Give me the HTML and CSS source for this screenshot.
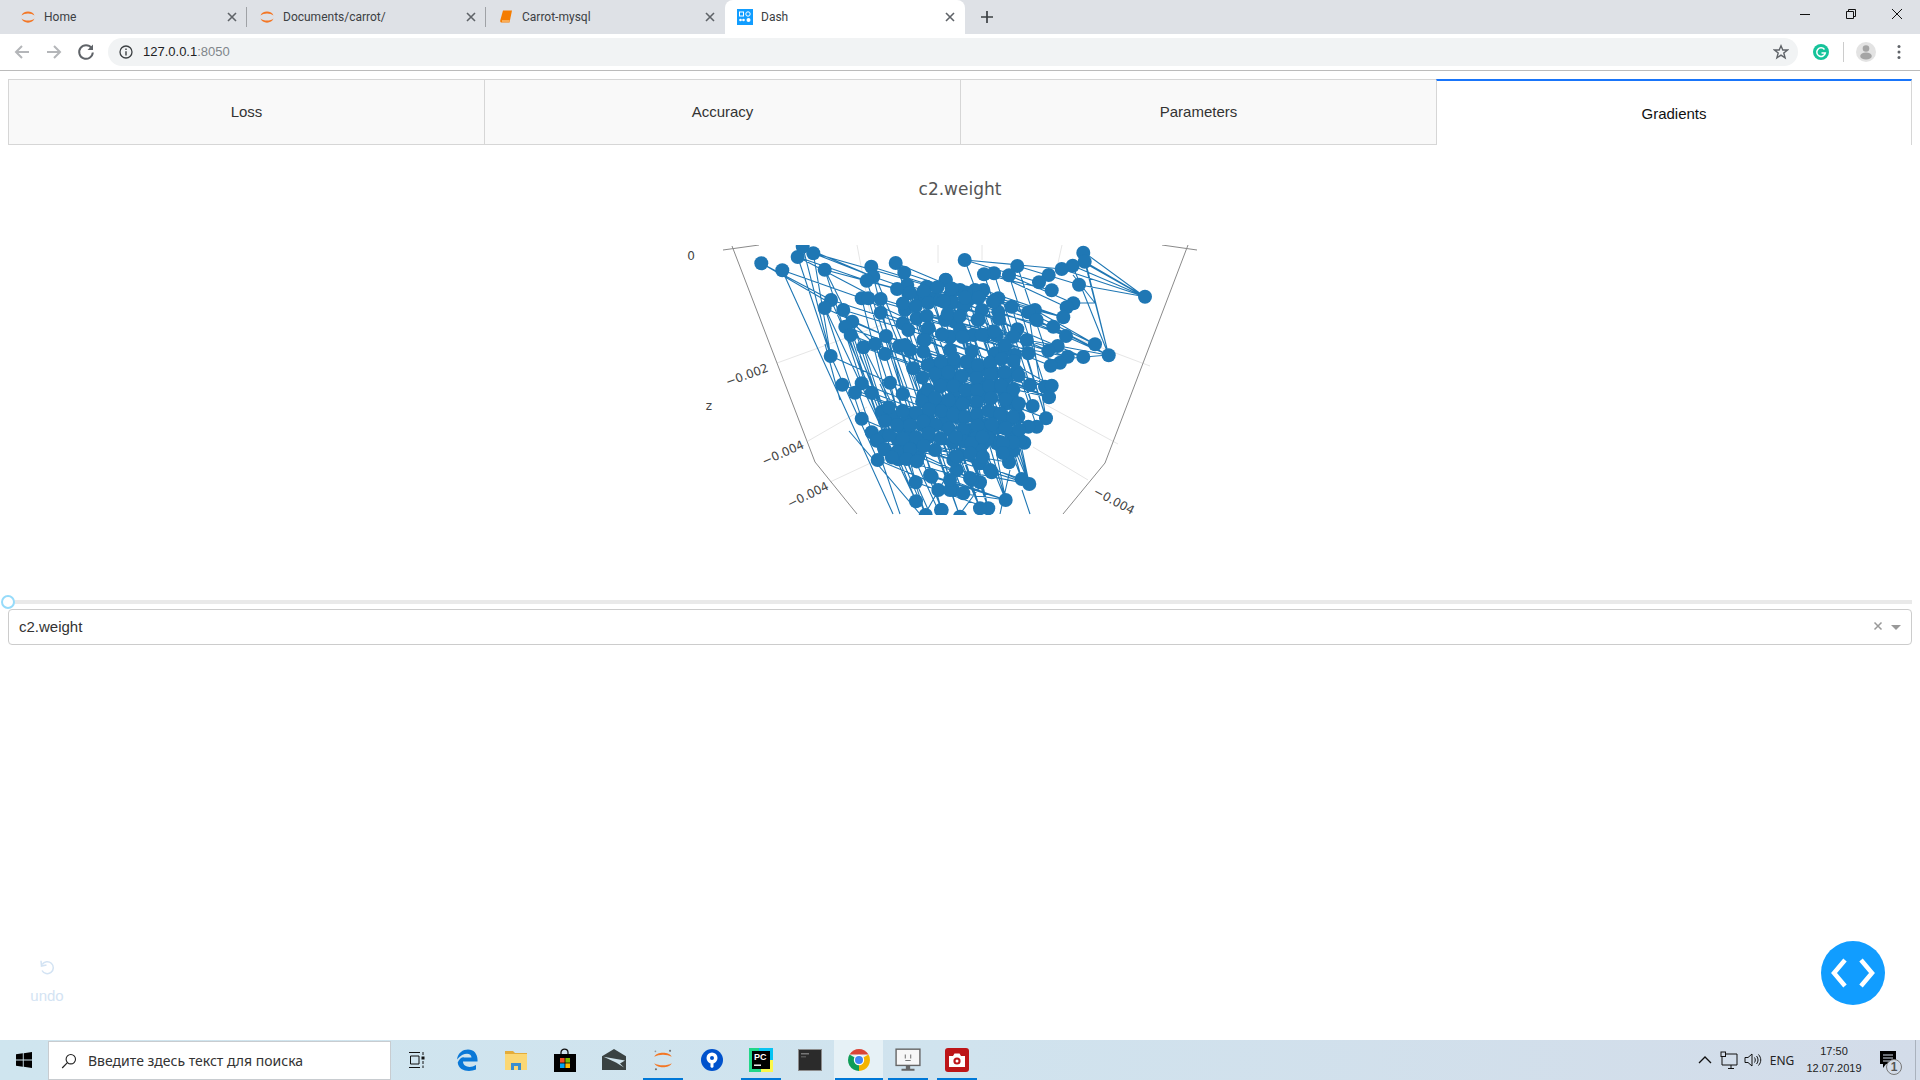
FILE: index.html
```html
<!DOCTYPE html>
<html>
<head>
    <meta charset="UTF-8" />
    <title>Dash</title>
    <link rel="stylesheet" href="styles.css">
</head>
<body>
    <svg class="icon-defs" width="0" height="0">
        <symbol id="jupyter" viewBox="0 0 16 16">
            <path fill="#f37726" d="M1.500 6.500C3 1 13 1 14.500 6.500C11.500 3.800 4.500 3.800 1.500 6.500Z"/>
            <path fill="#f37726" d="M1.500 9.500C4.500 12.200 11.500 12.200 14.500 9.500C13 15 3 15 1.500 9.500Z"/>
        </symbol>
        <symbol id="close-x" viewBox="0 0 12 12">
            <path d="M2 2L10 10M10 2L2 10" stroke="#5f6368" stroke-width="1.600" fill="none"/>
        </symbol>
    </svg>

    <div class="tabstrip">
        <div class="tab tab-sep">
            <svg class="favicon"><use href="#jupyter"/></svg>
            <span class="tab-title">Home</span>
            <svg class="tab-close"><use href="#close-x"/></svg>
        </div>
        <div class="tab tab-sep">
            <svg class="favicon"><use href="#jupyter"/></svg>
            <span class="tab-title">Documents/carrot/</span>
            <svg class="tab-close"><use href="#close-x"/></svg>
        </div>
        <div class="tab">
            <svg class="favicon" viewBox="0 0 16 16">
                <path fill="#f57c00" d="M5 1.500H14L11.500 13.500H4C2.500 13.500 2 12.500 2.300 11.200Z"/>
                <path fill="#ffd9a8" d="M4 11.500H11.600L11.300 12.500H4Z"/>
            </svg>
            <span class="tab-title">Carrot-mysql</span>
            <svg class="tab-close"><use href="#close-x"/></svg>
        </div>
        <div class="tab tab-current">
            <svg class="favicon" viewBox="0 0 16 16">
                <rect width="16" height="16" fill="#119dff"/>
                <rect x="2.500" y="3" width="4" height="4" fill="none" stroke="#fff"/>
                <circle cx="11" cy="5" r="2.200" fill="none" stroke="#fff"/>
                <circle cx="3.500" cy="11" r="1.300" fill="#fff"/>
                <circle cx="6.500" cy="11" r="1.300" fill="#fff"/>
                <circle cx="11.500" cy="11" r="2" fill="#fff"/>
            </svg>
            <span class="tab-title">Dash</span>
            <svg class="tab-close"><use href="#close-x"/></svg>
        </div>
        <svg class="new-tab" viewBox="0 0 14 14">
            <path d="M7 1V13M1 7H13" stroke="#3c4043" stroke-width="1.700"/>
        </svg>
        <div class="window-controls">
            <svg class="win-btn" viewBox="0 0 46 28"><path d="M18 14.500H28" stroke="#111" fill="none"/></svg>
            <svg class="win-btn" viewBox="0 0 46 28"><path d="M18.500 11.500H25.500V18.500H18.500ZM20.500 11.500V9.500H27.500V16.500H25.500" stroke="#111" fill="none"/></svg>
            <svg class="win-btn" viewBox="0 0 46 28"><path d="M18 9L28 19M28 9L18 19" stroke="#111" fill="none"/></svg>
        </div>
    </div>

    <div class="toolbar">
        <svg class="tool-btn" viewBox="0 0 32 32"><path d="M23 16H10M16 10L10 16L16 22" stroke="#b4b6b9" stroke-width="2" fill="none"/></svg>
        <svg class="tool-btn" viewBox="0 0 32 32"><path d="M9 16H22M16 10L22 16L16 22" stroke="#b4b6b9" stroke-width="2" fill="none"/></svg>
        <svg class="tool-btn" viewBox="0 0 32 32">
            <path d="M21.500 12A6.800 6.800 0 1 0 22.800 16.500" stroke="#5f6368" stroke-width="2" fill="none"/>
            <path d="M23 8.500V14H17.500Z" fill="#5f6368"/>
        </svg>
        <div class="address-bar">
            <svg class="info-icon" viewBox="0 0 14 14">
                <circle cx="7" cy="7" r="6" stroke="#3c4043" stroke-width="1.300" fill="none"/>
                <path d="M7 6.200V10.500M7 3.500V5" stroke="#3c4043" stroke-width="1.400"/>
            </svg>
            <span class="url">127.0.0.1<span class="url-port">:8050</span></span>
            <svg class="star-icon" viewBox="0 0 16 16">
                <path d="M8 1.800L9.800 6H14.500L10.800 9L12.100 13.800L8 11.100L3.900 13.800L5.200 9L1.500 6H6.200Z" stroke="#5f6368" stroke-width="1.400" fill="none"/>
            </svg>
        </div>
        <svg class="tool-btn" viewBox="0 0 32 32">
            <circle cx="16" cy="16" r="8" fill="#15c39a"/>
            <path d="M19.500 13.500A4.300 4.300 0 1 0 20.300 17H16.500" stroke="#fff" stroke-width="1.500" fill="none"/>
        </svg>
        <div class="tool-sep"></div>
        <svg class="tool-btn" viewBox="0 0 32 32">
            <circle cx="16" cy="16" r="10" fill="#e3e3e3"/>
            <circle cx="16" cy="12.500" r="3.300" fill="#a5a5a5"/>
            <ellipse cx="16" cy="20" rx="5.800" ry="3.600" fill="#a5a5a5"/>
        </svg>
        <svg class="tool-btn tool-menu" viewBox="0 0 32 32">
            <circle cx="16" cy="10.500" r="1.500" fill="#5f6368"/>
            <circle cx="16" cy="16" r="1.500" fill="#5f6368"/>
            <circle cx="16" cy="21.500" r="1.500" fill="#5f6368"/>
        </svg>
    </div>

    <div class="app">
        <div class="dash-tabs">
            <div class="dash-tab">Loss</div>
            <div class="dash-tab">Accuracy</div>
            <div class="dash-tab">Parameters</div>
            <div class="dash-tab dash-tab-selected">Gradients</div>
        </div>

        <!-- viewBox uses page coordinates, handier when reading points off the screenshot -->
        <svg class="plot" viewBox="8 145 1904 450">
            <defs>
                <clipPath id="scene-clip"><rect x="640" y="245" width="620" height="270"/></clipPath>
            </defs>
            <text class="plot-title" x="960" y="195" text-anchor="middle">c2.weight</text>
            <g clip-path="url(#scene-clip)">
                <g class="grid-lines">
                    <path d="M777 363L890 322M808 441L867 407M830 482L877 460"/>
                    <path d="M1150 366L1073 337M1118 444L1037 400M1088 480L1033 447"/>
                    <path d="M857 245L870 313M938 245L938 263M982 245L982 260M1062 245L1058 263"/>
                </g>
                <g class="axis-lines">
                    <path d="M723 250L759 245M732 246L815 462L857 514"/>
                    <path d="M1162 245L1197 250M1188 245L1105 463L1063 514"/>
                </g>
                <g id="trace"></g>
            </g>
            <g class="tick-labels">
                <text x="691" y="260" text-anchor="middle">0</text>
                <text x="709" y="410" text-anchor="middle">z</text>
                <text transform="translate(747 375) rotate(-20)" y="4" text-anchor="middle">−0.002</text>
                <text transform="translate(783 453) rotate(-24)" y="4" text-anchor="middle">−0.004</text>
                <text transform="translate(808 495) rotate(-26)" y="4" text-anchor="middle">−0.004</text>
                <text transform="translate(1114 501) rotate(28)" y="4" text-anchor="middle">−0.004</text>
            </g>
        </svg>

        <div class="slider">
            <div class="slider-track"></div>
            <div class="slider-handle"></div>
        </div>

        <div class="dropdown">
            <span class="dropdown-value">c2.weight</span>
            <svg class="dropdown-clear" viewBox="0 0 10 10"><path d="M1.500 1.500L8.500 8.500M8.500 1.500L1.500 8.500" stroke="#999" stroke-width="1.500"/></svg>
            <span class="dropdown-arrow"></span>
        </div>

        <div class="undo">
            <svg class="undo-icon" viewBox="0 0 18 18">
                <path d="M4.200 5.500A6 6 0 1 1 4 11.500" stroke="#d3e3f3" stroke-width="1.500" fill="none"/>
                <path d="M3 1.800L3.500 7L8.500 6" stroke="#d3e3f3" stroke-width="1.500" fill="none"/>
            </svg>
            <div>undo</div>
        </div>

        <div class="debug-btn">
            <svg viewBox="0 0 64 64" width="64" height="64">
                <path d="M24 19L13 32L24 45M40 19L51 32L40 45" stroke="#fff" stroke-width="4.500" fill="none"/>
            </svg>
        </div>
    </div>

    <div class="taskbar">
        <div class="start-btn">
            <svg viewBox="0 0 16 16" width="16" height="16">
                <path fill="#000" d="M0 2.300L6.800 1.300V7.600H0ZM7.700 1.200L16 0V7.600H7.700ZM0 8.400H6.800V14.700L0 13.700ZM7.700 8.400H16V16L7.700 14.800Z"/>
            </svg>
        </div>
        <div class="search-box">
            <svg class="search-icon" viewBox="0 0 16 16"><circle cx="9.800" cy="6.200" r="4.700" stroke="#222" stroke-width="1.100" fill="none"/><path d="M6.400 9.600L1.200 15" stroke="#222" stroke-width="1.200"/></svg>
            <span>Введите здесь текст для поиска</span>
        </div>
        <div class="task-view">
            <svg viewBox="0 0 18 18" width="18" height="18">
                <path d="M1 1.500H12M1 16.500H12M2.500 5H11V13H2.500Z" stroke="#111" fill="none"/>
                <path d="M15 1V4M15 10V13M15 14.500V17" stroke="#111" fill="none"/>
                <rect x="13.500" y="5.500" width="3" height="3" fill="#111"/>
            </svg>
        </div>
        <div class="task-item">
            <svg viewBox="0 0 24 24" width="24" height="24">
                <path fill="#0a78d7" d="M2 11.500C3 4.500 8 1.500 13 1.500C19 1.500 23 6 22.500 13.500H8C8 19 15.500 20.500 21 17V21.500C14 24.500 3.500 23 2.700 14.500C4.500 10 8 8.500 9 9.500C8.500 10 8.200 10.500 8 9.500H16.500C16.500 4.500 8 4 2 11.500Z"/>
            </svg>
        </div>
        <div class="task-item">
            <svg viewBox="0 0 24 24" width="24" height="24">
                <path fill="#e4ac3a" d="M1 3H9L11 5H23V8H1Z"/>
                <path fill="#fbd774" d="M1 6H23V22H1Z"/>
                <path fill="#3a8ed0" d="M7 22V15H17V22H14V18H10V22Z"/>
            </svg>
        </div>
        <div class="task-item">
            <svg viewBox="0 0 24 24" width="24" height="24">
                <path d="M8 7V4.500C8 0 15 0 15 4.500V7" stroke="#111" stroke-width="1.300" fill="none"/>
                <rect x="1" y="6" width="22" height="18" fill="#000"/>
                <rect x="7" y="10" width="4.600" height="4.600" fill="#f25022"/>
                <rect x="12.400" y="10" width="4.600" height="4.600" fill="#7fba00"/>
                <rect x="7" y="15.400" width="4.600" height="4.600" fill="#00a4ef"/>
                <rect x="12.400" y="15.400" width="4.600" height="4.600" fill="#ffb900"/>
            </svg>
        </div>
        <div class="task-item">
            <svg viewBox="0 0 24 24" width="24" height="24">
                <path fill="#3a4242" d="M12 1L24 8.200V22H0V8.200Z"/>
                <path fill="#cfe3ec" d="M1.500 8.800L23 12.500L18 15.500L22 19.500L14 14.500Z"/>
            </svg>
        </div>
        <div class="task-item running">
            <svg viewBox="0 0 24 24" width="26" height="26">
                <path fill="#f37726" d="M4 9C6 4 18 4 20 9C16 6.500 8 6.500 4 9Z"/>
                <path fill="#f37726" d="M4 15C8 17.500 16 17.500 20 15C18 20 6 20 4 15Z"/>
                <circle cx="18.500" cy="3.500" r="1" fill="#767677"/>
                <circle cx="5" cy="4" r="0.800" fill="#989798"/>
                <circle cx="5.500" cy="20.500" r="1" fill="#6f7070"/>
            </svg>
        </div>
        <div class="task-item">
            <svg viewBox="0 0 24 24" width="24" height="24">
                <circle cx="12" cy="12" r="11" fill="#0052cc"/>
                <circle cx="12" cy="10" r="5.500" fill="#fff"/>
                <circle cx="12" cy="10" r="2" fill="#0052cc"/>
                <path fill="#fff" d="M10.500 13H13.500V19L12 20L10.500 19Z"/>
            </svg>
        </div>
        <div class="task-item running">
            <svg viewBox="0 0 24 24" width="24" height="24">
                <path fill="#21d789" d="M0 0H16V12H0Z"/>
                <path fill="#fcf84a" d="M10 10H24V24H8Z"/>
                <path fill="#07c3f2" d="M10 0H24V12H10Z"/>
                <path fill="#21d789" d="M0 10H12V24H0Z"/>
                <rect x="3" y="3" width="18" height="18" fill="#000"/>
                <text class="pc-letters" x="5" y="12">PC</text>
                <rect x="5" y="16.500" width="7" height="1.400" fill="#fff"/>
            </svg>
        </div>
        <div class="task-item">
            <svg viewBox="0 0 24 24" width="24" height="24">
                <rect x="0.500" y="1.500" width="23" height="21" fill="#2b2b2b" stroke="#8c8c8c"/>
                <rect x="3" y="5" width="8" height="1.500" fill="#777"/>
                <rect x="3" y="8" width="5" height="1.500" fill="#555"/>
            </svg>
        </div>
        <div class="task-item running active">
            <svg viewBox="0 0 24 24" width="24" height="24">
                <path fill="#db4437" d="M2.500 6.500A11 11 0 0 1 21.500 6.500H12Z"/>
                <path fill="#f4b400" d="M21.500 6.500A11 11 0 0 1 12 23L12 12Z"/>
                <path fill="#0f9d58" d="M12 23A11 11 0 0 1 2.500 6.500L12 12Z"/>
                <circle cx="12" cy="12" r="5.200" fill="#fff"/>
                <circle cx="12" cy="12" r="4" fill="#4285f4"/>
            </svg>
        </div>
        <div class="task-item running">
            <svg viewBox="0 0 24 24" width="26" height="26">
                <rect x="1" y="2" width="22" height="15" fill="#f7f7f7" stroke="#666" stroke-width="1.300"/>
                <path d="M9.500 7V10.500M14.500 7V10.500M9.500 12.500H14.500" stroke="#777" fill="none"/>
                <path fill="#666" d="M10 17H14V20H18V22H6V20H10Z"/>
            </svg>
        </div>
        <div class="task-item running">
            <svg viewBox="0 0 24 24" width="24" height="24">
                <rect width="24" height="24" rx="3" fill="#bd1518"/>
                <path fill="#fff" d="M4 8H8L9.500 5.500H14.500L16 8H20V19H4Z"/>
                <circle cx="12" cy="13" r="3.600" fill="#bd1518"/>
                <circle cx="12" cy="13" r="1.500" fill="#fff"/>
            </svg>
        </div>

        <div class="tray">
            <svg class="tray-icon" viewBox="0 0 24 24"><path d="M6 15L12 9L18 15" stroke="#111" stroke-width="1.300" fill="none"/></svg>
            <svg class="tray-icon" viewBox="0 0 24 24">
                <path d="M8 6H20V17H8M11 20.500H17M14 17V20.500M5 8V17H8" stroke="#111" fill="none"/>
                <rect x="4" y="4" width="4.500" height="4.500" fill="#d3dce9" stroke="#111"/>
            </svg>
            <svg class="tray-icon" viewBox="0 0 24 24">
                <path d="M4 9.500H7L11 6V18L7 14.500H4Z" stroke="#111" fill="none"/>
                <path d="M13.500 9.500C14.500 11 14.500 13 13.500 14.500M15.500 8C17.500 10.500 17.500 13.500 15.500 16M17.500 6.500C20.500 10 20.500 14 17.500 17.500" stroke="#111" fill="none"/>
            </svg>
            <div class="tray-lang">ENG</div>
            <div class="tray-clock">
                <div>17:50</div>
                <div>12.07.2019</div>
            </div>
            <div class="tray-notify">
                <svg viewBox="0 0 24 24" width="24" height="24">
                    <path fill="#000" d="M5 3H21V16H11L8 20V16H5Z"/>
                    <path d="M8 7H18M8 10H18M8 13H15" stroke="#d3dce9"/>
                </svg>
                <span class="notify-badge">1</span>
            </div>
            <div class="show-desktop"></div>
        </div>
    </div>

    <script src="plot.js"></script>
</body>
</html>
```

FILE: styles.css
```css
* {
    box-sizing: border-box;
}
html, body {
    height: 100%;
}
body {
    margin: 0;
    display: flex;
    flex-direction: column;
    overflow: hidden;
    background-color: #fff;
    font-family: "Liberation Sans", Arial, sans-serif;
    color: #333;
}
.icon-defs {
    display: block;
    height: 0;
}

/* browser chrome */
.tabstrip {
    display: flex;
    align-items: center;
    flex: none;
    height: 34px;
    padding-left: 8px;
    background-color: #dee1e6;
}
.tab {
    display: flex;
    align-items: center;
    width: 239px;
    height: 34px;
    padding: 0 9px 1px 12px;
    font-family: Roboto, sans-serif;
    font-size: 12px;
    color: #3c4043;
}
.tab-sep {
    background-image: linear-gradient(#9fa2a6, #9fa2a6);
    background-size: 1px 20px;
    background-position: right center;
    background-repeat: no-repeat;
}
.tab-current {
    width: 240px;
    background-color: #fff;
    border-radius: 8px 8px 0 0;
}
.favicon {
    flex: none;
    width: 16px;
    height: 16px;
    margin-right: 8px;
}
.tab-title {
    flex: 1;
}
.tab-close {
    flex: none;
    width: 12px;
    height: 12px;
}
.new-tab {
    width: 14px;
    height: 14px;
    margin-left: 15px;
}
.window-controls {
    display: flex;
    margin-left: auto;
    align-self: flex-start;
}
.win-btn {
    display: block;
    width: 46px;
    height: 28px;
}

.toolbar {
    display: flex;
    align-items: center;
    flex: none;
    height: 37px;
    padding: 0 5px 1px 6px;
    background-color: #fff;
    border-bottom: 1px solid #bbb;
}
.tool-btn {
    flex: none;
    width: 32px;
    height: 32px;
}
.tool-menu {
    margin-left: 1px;
}
.tool-sep {
    flex: none;
    width: 1px;
    height: 20px;
    margin: 0 6px 0 6px;
    background-color: #ccc;
}
.address-bar {
    display: flex;
    align-items: center;
    flex: 1;
    height: 28px;
    margin: 0 7px 0 6px;
    padding: 0 9px 0 11px;
    background-color: #f1f3f4;
    border-radius: 14px;
}
.info-icon {
    width: 14px;
    height: 14px;
    margin-right: 10px;
}
.url {
    flex: 1;
    font-size: 13px;
    color: #202124;
}
.url-port {
    color: #80868b;
}
.star-icon {
    width: 16px;
    height: 16px;
}

/* dash app */
.app {
    position: relative;
    flex: 1;
    padding: 8px 8px 0;
}
.dash-tabs {
    display: grid;
    grid-template-columns: repeat(4, 1fr);
}
.dash-tab {
    height: 66px;
    display: flex;
    align-items: center;
    justify-content: center;
    padding-bottom: 2px;
    font-size: 15px;
    color: #333;
    background-color: #f9f9f9;
    border: 1px solid #d6d6d6;
    border-right: none;
}
.dash-tab-selected {
    padding: 0;
    color: #111;
    background-color: #fff;
    border-top: 2px solid #1975fa;
    border-bottom: none;
    border-right: 1px solid #d6d6d6;
}

.plot {
    display: block;
    width: 1904px;
    height: 450px;
}
.plot-title {
    font-family: "DejaVu Sans", Verdana, sans-serif;
    font-size: 17px;
    fill: #555;
}
.tick-labels {
    font-family: "DejaVu Sans", Verdana, sans-serif;
    font-size: 12px;
    fill: #444;
}
.grid-lines {
    stroke: #e6e6e6;
    fill: none;
}
.axis-lines {
    stroke: #8a8a8a;
    fill: none;
}
.trace-line {
    stroke: #1f77b4;
    stroke-width: 1.100;
    fill: none;
}
.trace-dot {
    fill: #1f77b4;
}

.slider {
    position: relative;
    height: 14px;
    padding-top: 5px;
}
.slider-track {
    height: 4px;
    background-color: #e9e9e9;
}
.slider-handle {
    position: absolute;
    left: -7px;
    top: 0;
    width: 14px;
    height: 14px;
    background-color: #fff;
    border: 2px solid #96dbfa;
    border-radius: 50%;
}
.dropdown {
    display: flex;
    align-items: center;
    height: 36px;
    padding: 0 10px 2px 10px;
    font-size: 15px;
    color: #333;
    background-color: #fff;
    border: 1px solid #ccc;
    border-radius: 4px;
}
.dropdown-value {
    flex: 1;
}
.dropdown-clear {
    width: 10px;
    height: 10px;
    margin-right: 8px;
}
.dropdown-arrow {
    width: 0;
    height: 0;
    margin-top: 3px;
    border-style: solid;
    border-width: 5px 5px 0;
    border-color: #999 transparent transparent;
}

.undo {
    position: absolute;
    left: 26px;
    top: 888px;
    width: 42px;
    text-align: center;
    font-size: 15px;
    color: #d3e3f3;
}
.undo-icon {
    display: block;
    width: 18px;
    height: 18px;
    margin: 0 auto 10px;
}
.debug-btn {
    position: absolute;
    left: 1821px;
    top: 870px;
    width: 64px;
    height: 64px;
    background-color: #119dff;
    border-radius: 50%;
}

/* windows taskbar */
.taskbar {
    display: flex;
    align-items: center;
    flex: none;
    height: 40px;
    background: linear-gradient(90deg, #cfe5ef 0%, #d0e3ee 50%, #d3dce9 100%);
}
.start-btn {
    display: flex;
    align-items: center;
    justify-content: center;
    width: 48px;
    height: 40px;
}
.search-box {
    display: flex;
    align-items: center;
    width: 343px;
    height: 39px;
    margin-top: 1px;
    padding-left: 12px;
    font-family: "Noto Sans", sans-serif;
    font-size: 14px;
    color: #333;
    background-color: #fff;
    border: 1px solid #c8ccd0;
}
.search-icon {
    width: 16px;
    height: 16px;
    margin-right: 11px;
}
.task-view {
    display: flex;
    align-items: center;
    justify-content: center;
    width: 51px;
    height: 40px;
}
.task-item {
    display: flex;
    align-items: center;
    justify-content: center;
    width: 49px;
    height: 40px;
}
.running {
    background-image: linear-gradient(#0078d7, #0078d7);
    background-size: 40px 2px;
    background-position: center bottom;
    background-repeat: no-repeat;
}
.active {
    background-color: #e6f1f6;
    background-size: 48px 2px;
}
.pc-letters {
    font-family: "Liberation Sans", sans-serif;
    font-size: 9px;
    font-weight: bold;
    fill: #fff;
}
.tray {
    display: flex;
    align-items: center;
    height: 40px;
    margin-left: auto;
}
.tray-icon {
    width: 24px;
    height: 24px;
}
.tray-lang {
    width: 34px;
    text-align: center;
    font-family: "Noto Sans", sans-serif;
    font-size: 12px;
    color: #222;
}
.tray-clock {
    width: 70px;
    text-align: center;
    font-size: 11px;
    line-height: 17px;
    color: #222;
}
.tray-notify {
    position: relative;
    display: flex;
    align-items: center;
    width: 36px;
    height: 40px;
    padding-left: 6px;
}
.notify-badge {
    position: absolute;
    left: 17px;
    top: 19px;
    width: 16px;
    height: 16px;
    font-size: 12px;
    font-weight: bold;
    line-height: 14px;
    text-align: center;
    color: #555;
    background-color: #d3dce9;
    border: 1px solid #777;
    border-radius: 50%;
}
.show-desktop {
    width: 15px;
    height: 40px;
    background-image: linear-gradient(#aab2bd, #aab2bd);
    background-size: 1px 100%;
    background-position: 10px 0;
    background-repeat: no-repeat;
}
```

FILE: plot.js
```js
// points read off the picture, in 3x crop coordinates of two overlapping crops
const leftPoints = [
    [304,100],[367,121],[413,81],[428,50],[460,70],[494,119],[634,110],[707,99],[640,140],[620,152],
    [733,128],[857,149],[742,165],[800,170],[745,190],[780,200],[820,205],[875,215],[605,205],[625,205],
    [662,207],[513,210],[494,234],[550,240],[662,248],[577,275],[556,290],[572,315],[728,280],[745,300],
    [770,265],[800,258],[805,295],[790,330],[870,320],[885,275],[678,318],[610,352],[645,342],[675,372],
    [718,348],[512,378],[750,360],[790,365],[760,415],[690,458],[605,460],[547,464],[585,488],[635,488],
    [728,492],[790,495],[830,440],[850,420],[880,400],[820,515],[855,522],[890,470],[605,566],[665,545],
    [700,560],[760,550],[790,560],[850,583],[635,607],[672,617],[650,632],[715,630],[745,600],[890,560],
    [653,690],[715,688],[775,680],[755,650],[885,680],[890,720],[767,757],[815,740],[835,780],[880,780],
    [768,814],[843,840],[797,855],[840,400],[870,440],[880,510],[840,470],[720,590],[740,570],[735,650]
];
const rightPoints = [
    [74,90],[232,108],[430,68],[434,95],[398,107],[365,117],[326,135],[297,157],[335,181],[417,164],
    [207,136],[162,130],[132,133],[17,150],[615,200],[400,220],[380,232],[370,262],[285,240],[265,247],
    [290,270],[340,290],[378,318],[465,343],[353,348],[325,362],[506,376],[430,381],[383,380],[360,398],
    [332,407],[232,298],[260,330],[265,370],[220,320],[225,375],[165,370],[195,360],[170,315],[175,245],
    [215,230],[175,205],[130,180],[60,180],[35,215],[85,210],[125,240],[48,275],[115,270],[30,320],
    [75,318],[100,315],[95,365],[40,400],[100,405],[5,430],[60,440],[120,420],[160,430],[200,440],
    [230,425],[270,465],[315,470],[335,467],[327,502],[278,528],[318,565],[290,590],[265,590],[235,560],
    [200,520],[150,500],[100,480],[70,520],[15,520],[60,560],[110,560],[165,550],[90,600],[15,580],
    [215,610],[130,640],[170,640],[253,638],[220,662],[207,697],[155,727],[120,700],[40,690],[120,757],
    [245,747],[268,762],[197,810],[145,835],[120,835],[60,860],[5,840],[70,790],[30,780],[95,750],
    [170,470],[215,500],[230,530],[180,590],[140,460],[45,480],[210,570],[150,610]
];
// the thick middle of the cloud, already in page coordinates
const midPoints = [
    [905,310],[925,300],[945,320],[925,340],[905,345],[950,350],[930,365],[950,385],[970,370],[990,365],
    [965,400],[985,395],[1005,390],[925,415],[945,420],[965,430],[985,425],[1005,420],[925,395],[915,440],
    [935,450],[960,455],[980,450],[1000,445],[1020,440],[930,475],[950,480],[970,478],[990,470],
    [950,295],[975,290],[995,300],[960,330],[985,335],[1005,345]
];
// solid blobs: x0, y0, x1, y1, spacing
const blobs = [
    [925,362,1025,440,13],[887,410,927,457,13],[900,290,965,305,13],
    [955,440,1010,465,15],[945,300,1010,345,17],[890,460,925,470,14]
];

const points = [
    ...leftPoints.map(p => [660 + p[0] / 3, 230 + p[1] / 3]),
    ...rightPoints.map(p => [940 + p[0] / 3, 230 + p[1] / 3]),
    ...midPoints
];
const lineCount = points.length;

for (const [x0, y0, x1, y1, step] of blobs) {
    for (let y = y0; y <= y1; y += step) {
        for (let x = x0; x <= x1; x += step) {
            // a bit of wobble so it doesn't read as a grid
            points.push([x + 3 * Math.sin(y * 1.7 + x), y + 3 * Math.cos(x * 2.3 - y)]);
        }
    }
}

// segments that stand out at the edge of the cloud
const longLines = [
    [761,263,830,303],[782,270,893,514],[825,308,916,501],[825,270,890,400],[813,253,933,287],
    [798,257,880,300],[1145,297,1083,262],[1145,297,1085,253],[965,260,1062,269],[1095,303,1073,303],
    [1095,303,1073,275],[1108,355,1040,325],[1108,355,1050,360],[859,394,900,514],[825,344,840,400],
    [849,431,920,514],[840,310,880,350],[860,356,930,514],[880,384,940,514],[1022,490,1030,514],
    [985,480,960,514],[950,470,925,514],[1010,470,1000,514]
];

function nearest(x, y, self) {
    let best = null, bestDist = Infinity;
    for (const p of points) {
        if (p === self) continue;
        const d = (p[0] - x) ** 2 + (p[1] - y) ** 2;
        if (d < bestDist) { best = p; bestDist = d; }
    }
    return best;
}

let d = longLines.map(l => `M${l[0]} ${l[1]}L${l[2]} ${l[3]}`).join('');
for (const p of points.slice(0, lineCount)) {
    // the cloud's lines mostly fall down to the right, with some running flatter
    for (const [dx, dy] of [[35, 105], [70, 25]]) {
        const q = nearest(p[0] + dx, p[1] + dy, p);
        if (Math.hypot(q[0] - p[0] - dx, q[1] - p[1] - dy) < 18) {
            d += `M${p[0].toFixed(1)} ${p[1].toFixed(1)}L${q[0].toFixed(1)} ${q[1].toFixed(1)}`;
        }
    }
}

const NS = 'http://www.w3.org/2000/svg';
const trace = document.getElementById('trace');
const path = document.createElementNS(NS, 'path');
path.setAttribute('class', 'trace-line');
path.setAttribute('d', d);
trace.appendChild(path);

for (const p of points) {
    const c = document.createElementNS(NS, 'circle');
    c.setAttribute('class', 'trace-dot');
    c.setAttribute('cx', p[0].toFixed(1));
    c.setAttribute('cy', p[1].toFixed(1));
    c.setAttribute('r', 7);
    trace.appendChild(c);
}
```
